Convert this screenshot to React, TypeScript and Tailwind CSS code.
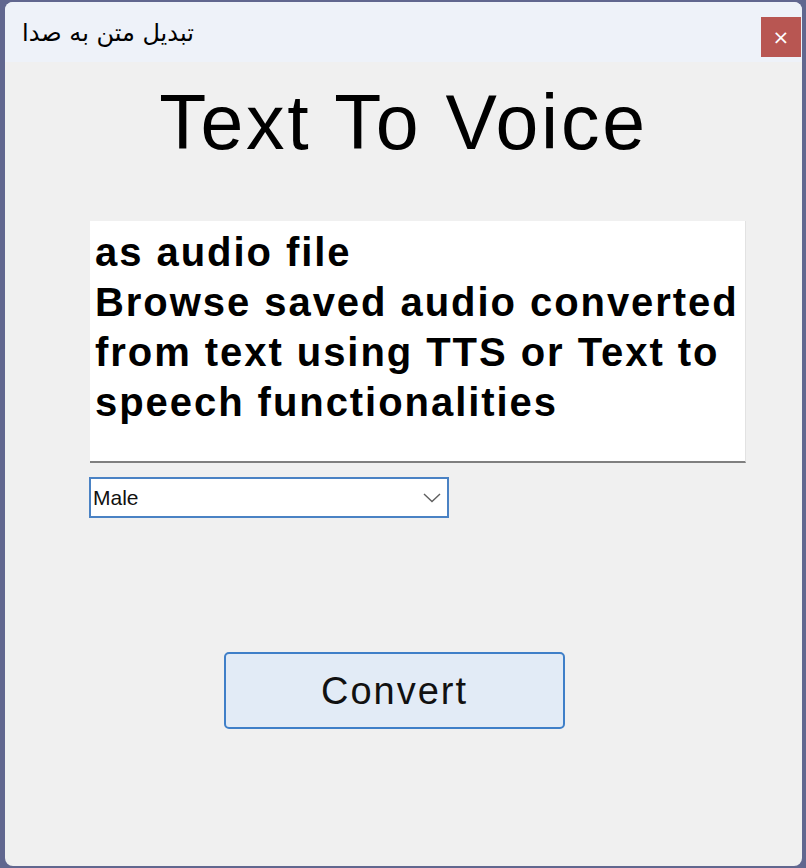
import React from "react";

export default function App() {
  return (
    <div className="w-[806px] h-[868px] bg-[#61678f] pt-[2px] pl-[5px] overflow-hidden">
      <div className="w-[797px] h-[864px] rounded-[8px] overflow-hidden flex flex-col bg-[#f0f0f0]">
        {/* title bar */}
        <div className="h-[60px] bg-[#eef2f9] flex items-start justify-between shrink-0">
          <div
            className="pl-[17px] pt-[19px] text-[24px] text-black leading-none"
            style={{ fontFamily: '"DejaVu Sans", "Noto Sans", sans-serif' }}
            dir="rtl"
          >
            تبدیل متن به صدا
          </div>
          <div className="mt-[15px] w-[40px] h-[40px] mr-[1px] bg-[#b85652] flex items-center justify-center">
            <span
              className="text-white text-[20px] leading-none"
              style={{ fontFamily: '"DejaVu Sans", sans-serif' }}
            >
              ×
            </span>
          </div>
        </div>

        {/* body */}
        <div
          className="flex flex-col text-black"
          style={{ fontFamily: '"Liberation Sans", Arial, sans-serif' }}
        >
          <div className="mt-[22px] text-center text-[77px] leading-[76px] tracking-[2.8px]">
            Text To Voice
          </div>

          <div className="mt-[61px] ml-[85px] w-[656px] h-[242px] bg-white border-b-2 border-b-[#7f7f7f] border-r border-r-[#e2e2e2] pt-[6px] pl-[5px] font-bold text-[40px] leading-[50px] tracking-[1.95px]">
            <div className="whitespace-nowrap">as audio file</div>
            <div className="whitespace-nowrap">Browse saved audio converted</div>
            <div className="whitespace-nowrap">from text using TTS or Text to</div>
            <div className="whitespace-nowrap">speech functionalities</div>
          </div>

          <div className="mt-[14px] ml-[84px] w-[360px] h-[41px] bg-white border-2 border-[#4a82c4] flex items-center justify-between pl-[2px] pr-[6px]">
            <span className="text-[21px] leading-none text-[#111]">Male</span>
            <svg width="18" height="10" viewBox="0 0 18 10">
              <polyline
                points="1,1 9,8.5 17,1"
                fill="none"
                stroke="#5f5f5f"
                strokeWidth="1.4"
              />
            </svg>
          </div>

          <div className="mt-[134px] ml-[219px] w-[341px] h-[77px] rounded-[5px] border-2 border-[#3f7fc8] bg-[#e2ebf6] flex items-center justify-center">
            <span className="text-[38px] leading-none tracking-[2px] text-[#111]">Convert</span>
          </div>
        </div>
      </div>
    </div>
  );
}
